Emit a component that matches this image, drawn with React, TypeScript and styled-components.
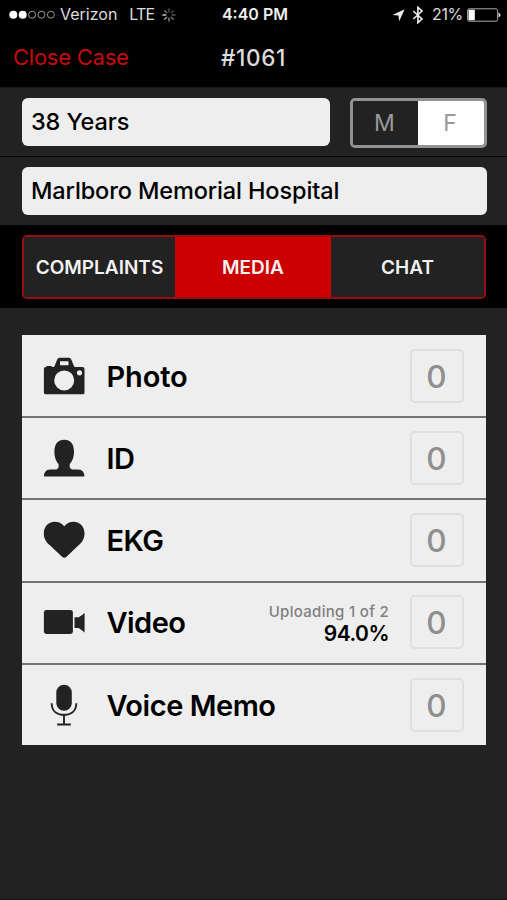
import React from 'react';
import styled, { createGlobalStyle } from 'styled-components';

const GlobalStyle = createGlobalStyle`
  * { box-sizing: border-box; }
  body {
    margin: 0;
    background: #222;
    font-family: Inter, "Liberation Sans", sans-serif;
  }
`;

const Screen = styled.div`
  width: 507px;
  height: 900px;
  overflow: hidden;
  background: #222;
  border-bottom: 1px solid #1c161a;
`;

const Label = styled.span<{ $size: number; $weight?: number; $track?: number; $color?: string }>`
  font-size: ${p => p.$size}px;
  font-weight: ${p => p.$weight ?? 400};
  letter-spacing: ${p => p.$track ?? 0}px;
  color: ${p => p.$color ?? '#000'};
  line-height: 1.2;
  white-space: nowrap;
`;

const StatusBar = styled.div`
  display: grid;
  grid-template-columns: 1fr auto 1fr;
  align-items: center;
  height: 30px;
  padding: 0 6px 0 9px;
  background: #000;
`;

const StatusGroup = styled.div<{ $end?: boolean }>`
  display: flex;
  align-items: center;
  justify-content: ${p => (p.$end ? 'flex-end' : 'flex-start')};
`;

const Spaced = styled.span<{ $left: number }>`
  display: inline-flex;
  margin-left: ${p => p.$left}px;
`;

const NavBar = styled.header`
  display: grid;
  grid-template-columns: 1fr auto 1fr;
  align-items: center;
  height: 57px;
  padding: 0 13px 2px;
  background: #000;
`;

const NavButton = styled.button`
  justify-self: start;
  padding: 0;
  border: 0;
  background: none;
  font-family: inherit;
`;

const FieldRow = styled.div`
  display: flex;
  gap: 20px;
  height: 69px;
  padding: 10px 20px 0 22px;
  border-top: 1px solid #171717;
  & + & {
    border-top-color: #050505;
  }
`;

const Field = styled.div`
  flex: 1;
  display: flex;
  align-items: center;
  height: 48px;
  padding: 1px 9px 0;
  border-radius: 6px;
  background: #eee;
`;

const GenderToggle = styled.div`
  display: grid;
  grid-template-columns: 65px 1fr;
  width: 137px;
  height: 50px;
  border: 3px solid #929292;
  border-radius: 5px;
  overflow: hidden;
`;

const GenderOption = styled.div<{ $selected?: boolean }>`
  display: flex;
  align-items: center;
  justify-content: center;
  padding: 1px 2px 0 0;
  background: ${p => (p.$selected ? '#fff' : '#222')};
`;

const TabStrip = styled.nav`
  height: 83px;
  padding: 10px 21px 0 22px;
  background: #000;
`;

const Tabs = styled.div`
  display: grid;
  grid-template-columns: 151px 156px 1fr;
  height: 64px;
  border: 2px solid #980d10;
  border-radius: 5px;
  overflow: hidden;
`;

const Tab = styled.div<{ $active?: boolean }>`
  display: flex;
  align-items: center;
  justify-content: center;
  padding-top: 2px;
  background: ${p => (p.$active ? '#c00' : '#222')};
`;

const MediaList = styled.main`
  display: grid;
  grid-template-rows: 81px repeat(3, 82.3px) 82.5px;
  width: 464px;
  margin: 27px 0 0 22px;
  background: #eee;
`;

const MediaRow = styled.div`
  display: flex;
  align-items: center;
  padding: 0 22px 0 21px;
  & + & {
    padding-bottom: 1px;
    border-top: 2px solid #727272;
  }
`;

const IconBox = styled.div`
  display: flex;
  justify-content: center;
  width: 42px;
  margin-right: 21.4px;
`;

const Name = styled(Label)`
  padding-top: 3px;
`;

const Upload = styled.div`
  display: flex;
  flex-direction: column;
  align-items: flex-end;
  margin: 0 21px 0 auto;
  padding-top: 4px;
`;

const Count = styled.div`
  display: flex;
  align-items: center;
  justify-content: center;
  width: 54px;
  height: 54px;
  margin-left: auto;
  padding: 2px 1px 0 0;
  border: 2px solid #dfdfdf;
  border-radius: 5px;
  ${Upload} + & { margin-left: 0; }
`;

const SignalDots = () => (
  <svg width="47" height="10" viewBox="0 0 47 10">
    {[0, 1, 2, 3, 4].map(i => (
      <circle key={i} cx={4.3 + i * 9.4} cy="4.700" r={i < 2 ? 4 : 3.5}
        fill={i < 2 ? '#fff' : 'none'} stroke={i < 2 ? 'none' : '#aaa'} strokeWidth="0.9" />
    ))}
  </svg>
);

const Spinner = () => (
  <svg width="14" height="14" viewBox="0 0 14 14" strokeWidth="1.4" strokeLinecap="round">
    {[0, 1, 2, 3, 4, 5, 6, 7].map(i => (
      <line key={i} x1="7" y1="3.8" x2="7" y2="0.9" transform={`rotate(${i * 45} 7 7)`}
        stroke={['#555', '#444', '#555', '#777', '#888', '#999', '#ccc', '#777'][i]} />
    ))}
  </svg>
);

const LocationArrow = () => (
  <svg width="13" height="13" viewBox="0 0 13 13"><path d="M12.6.3 7.2 12.2 6.5 6.500.5 5.900Z" fill="#eee" /></svg>
);

const Bluetooth = () => (
  <svg width="12" height="18" viewBox="0 0 12 18" fill="none" stroke="#eee" strokeWidth="1.6">
    <path d="M1.3 5 10 13 5.9 16.7V1.3L10 5 1.3 13" />
  </svg>
);

const Battery = () => (
  <svg width="34" height="14" viewBox="0 0 34 14">
    <rect x="0.6" y="0.8" width="30" height="12.4" rx="1.5" fill="none" stroke="#aaa" />
    <rect x="1.5" y="1.7" width="6.3" height="10.6" rx="0.5" fill="#fff" />
    <path d="M31.5 4.7q2 .6 2 2.3t-2 2.3Z" fill="#ddd" />
  </svg>
);

const CameraIcon = () => (
  <svg width="42" height="38" viewBox="0 0 42 38" fill="#222">
    <path fillRule="evenodd" d="M3.5 10V9h5.2v1h1.5q1 0 1.4-1.1L14 3Q14.8.8 16.7.8h9.1q1.9 0 2.7 2.2l2.4 5.9q.4 1.1 1.4 1.1h7.3q1.9 0 1.9 1.9v23.5q0 1.9-1.9 1.9H2.8Q.9 37.3.9 35.4V11.9Q.9 10 2.8 10ZM17 4.3v4h8.5v-4ZM21.2 13.4a10 10 0 1 0 0 20 10 10 0 1 0 0-20ZM36.5 13.2a2.6 2.6 0 1 0 0 5.2 2.6 2.6 0 1 0 0-5.2Z" />
  </svg>
);

const PersonIcon = () => (
  <svg width="42" height="38" viewBox="0 0 42 38" fill="#222">
    <path d="M21.3.7C27.5.7 31 5.1 31 12.5c0 6-1.7 9.5-4.3 12.6v2.3q0 3.1 4.3 3.1h4.500q5.800.4 5.800 6.900H1q0-6.500 5.800-6.900h4.500q4.300 0 4.300-3.100v-2.300C13 22 11.400 18.500 11.400 12.500 11.400 5.100 15 .7 21.300.7Z" />
  </svg>
);

const HeartIcon = () => (
  <svg width="42" height="38" viewBox="0 0 42 38" fill="#222">
    <path d="M21.3 5.2C24.5 1.6 27.6.8 30.8.8c6.1 0 10.7 5 10.7 11.6 0 5-2 8.4-6.2 12.2L23.5 35.7q-2.2 2-4.5 0L7.2 24.6C3 20.8.8 17.4.8 12.4.8 5.8 5.4.8 11.5.8c3.2 0 6.6.8 9.8 4.4Z" />
  </svg>
);

const VideoIcon = () => (
  <svg width="42" height="26" viewBox="0 0 42 26" fill="#222">
    <rect x="0.9" y="1" width="29" height="24" rx="2.4" />
    <path d="M31.5 8.3h4.2l3.1-2Q40.500 5.200 40.800 4.300h.8v19h-.8q-.3-.9-2-2.100l-3.100-2.200h-4.200Z" />
  </svg>
);

const MicIcon = () => (
  <svg width="28" height="42" viewBox="0 0 28 42">
    <rect x="6.3" y="0.8" width="15.5" height="26" rx="7.75" fill="#222" />
    <g fill="none" stroke="#222" strokeWidth="1.9">
      <path d="M1.7 19.3C1.7 27 7 30.8 14 30.8S26.3 27 26.3 19.3" />
      <path d="M14 31v10M7.2 40.5h13.6" />
    </g>
  </svg>
);

interface MediaItem {
  name: string;
  track: number;
  icon: React.ReactNode;
  progress?: { caption: string; percent: string };
}

const items: MediaItem[] = [
  { name: 'Photo', track: -0.1, icon: <CameraIcon /> },
  { name: 'ID', track: -0.4, icon: <PersonIcon /> },
  { name: 'EKG', track: -0.5, icon: <HeartIcon /> },
  { name: 'Video', track: -0.5, icon: <VideoIcon />, progress: { caption: 'Uploading 1 of 2', percent: '94.0%' } },
  { name: 'Voice Memo', track: -0.45, icon: <MicIcon /> },
];

export default function App() {
  return (
    <Screen>
      <GlobalStyle />
      <StatusBar>
        <StatusGroup>
          <SignalDots />
          <Spaced $left={4}><Label $size={16} $color="#ddd">Verizon</Label></Spaced>
          <Spaced $left={12}><Label $size={16} $track={-0.9} $color="#ddd">LTE</Label></Spaced>
          <Spaced $left={8}><Spinner /></Spaced>
        </StatusGroup>
        <Label $size={16} $weight={600} $color="#eee">4:40 PM</Label>
        <StatusGroup $end>
          <LocationArrow />
          <Spaced $left={7}><Bluetooth /></Spaced>
          <Spaced $left={8}><Label $size={16} $track={-0.3} $color="#ddd">21%</Label></Spaced>
          <Spaced $left={4}><Battery /></Spaced>
        </StatusGroup>
      </StatusBar>
      <NavBar>
        <NavButton><Label $size={22} $track={-0.25} $color="#c90a0a">Close Case</Label></NavButton>
        <Label $size={22.5} $weight={500} $track={0.7} $color="#ddd">#1061</Label>
      </NavBar>
      <section>
        <FieldRow>
          <Field><Label $size={23.5} $weight={500} $track={-0.12}>38 Years</Label></Field>
          <GenderToggle>
            <GenderOption><Label $size={23} $color="#999">M</Label></GenderOption>
            <GenderOption $selected><Label $size={23} $color="#999">F</Label></GenderOption>
          </GenderToggle>
        </FieldRow>
        <FieldRow>
          <Field><Label $size={23.5} $weight={500} $track={-0.12}>Marlboro Memorial Hospital</Label></Field>
        </FieldRow>
      </section>
      <TabStrip>
        <Tabs>
          <Tab><Label $size={19} $weight={600} $color="#f2f2f2">COMPLAINTS</Label></Tab>
          <Tab $active><Label $size={19} $weight={600} $color="#f2f2f2">MEDIA</Label></Tab>
          <Tab><Label $size={19} $weight={600} $color="#f2f2f2">CHAT</Label></Tab>
        </Tabs>
      </TabStrip>
      <MediaList>
        {items.map(item => (
          <MediaRow key={item.name}>
            <IconBox>{item.icon}</IconBox>
            <Name $size={29} $weight={600} $track={item.track}>{item.name}</Name>
            {item.progress && (
              <Upload>
                <Label $size={15} $weight={500} $track={0.3} $color="#808080">{item.progress.caption}</Label>
                <Label $size={21} $weight={600} $track={-0.5}>{item.progress.percent}</Label>
              </Upload>
            )}
            <Count><Label $size={31.5} $weight={500} $color="#8f8f8f">0</Label></Count>
          </MediaRow>
        ))}
      </MediaList>
    </Screen>
  );
}
